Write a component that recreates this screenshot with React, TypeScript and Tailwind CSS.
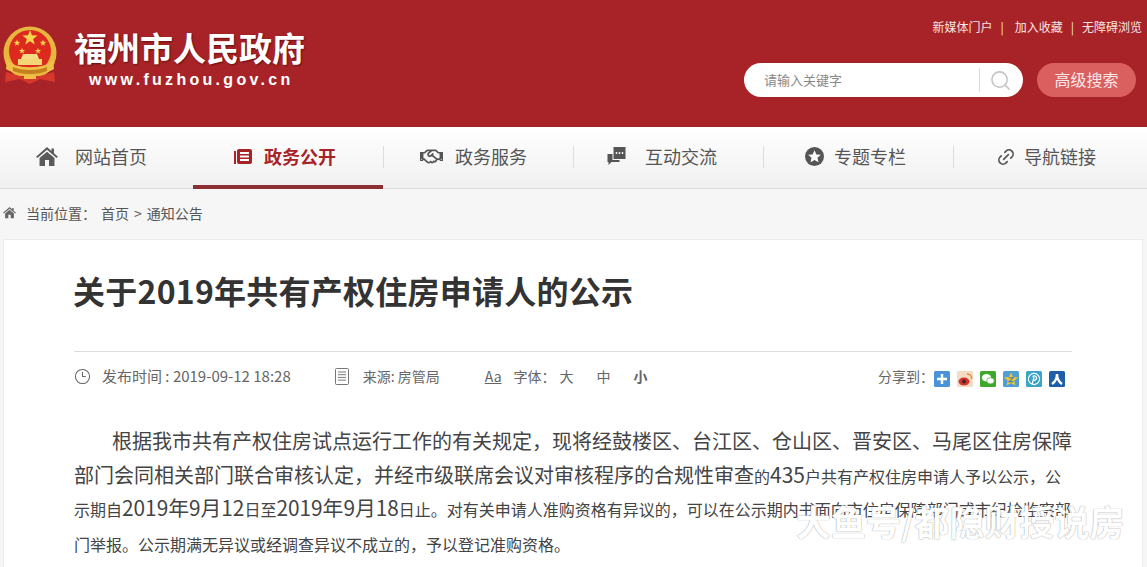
import React from "react";
import { Clock3, Search, Link2 } from "lucide-react";
import { FaRegHandshake } from "react-icons/fa";

const cjk = "font-['Noto_Sans_CJK_SC','Liberation_Sans',sans-serif]";

function Star({ x, y, r }: { x: number; y: number; r: number }) {
  const pts = Array.from({ length: 10 }, (_, i) => {
    const a = -Math.PI / 2 + (i * Math.PI) / 5;
    const d = i % 2 === 0 ? r : r * 0.42;
    return `${(x + d * Math.cos(a)).toFixed(2)},${(y + d * Math.sin(a)).toFixed(2)}`;
  }).join(" ");
  return <polygon points={pts} fill="#f6d24e" />;
}

function Emblem() {
  return (
    <svg width="56" height="60" viewBox="0 0 56 60">
      <circle cx="28" cy="27" r="26.5" fill="#e8b63e" />
      <circle cx="28" cy="25" r="21" fill="#dc2a1f" />
      <Star x={28} y={12} r={8} />
      <Star x={15} y={17} r={3.4} />
      <Star x={41} y={17} r={3.4} />
      <Star x={20} y={25} r={3.2} />
      <Star x={36} y={25} r={3.2} />
      <path d="M21 28 H35 L37 33 H19 Z" fill="#f6dd84" />
      <path d="M16 33 H40 V39 H16 Z" fill="#f3d576" />
      <path d="M5 33 C10 44 46 44 51 33 L52 43 C42 50 14 50 4 43 Z" fill="#f0bf48" />
      <path d="M11 41 C20 45 36 45 45 41 L45 45 C36 49 20 49 11 45 Z" fill="#c47f1f" />
      <path d="M4 46 L18 50 H38 L52 46 L53 56 L38 53 L28 58 L18 53 L3 56 Z" fill="#d6382b" />
      <rect x="22" y="49" width="12" height="4" fill="#f0bf48" />
    </svg>
  );
}

function NewsIcon() {
  return (
    <svg width="18" height="15" viewBox="0 0 18 15">
      <rect x="0" y="2" width="2" height="13" fill="#a82327" />
      <rect x="3" y="0" width="15" height="15" rx="2" fill="#a82327" />
      <rect x="6" y="3" width="9" height="2" fill="#fff" />
      <rect x="6" y="6.5" width="9" height="2" fill="#fff" />
      <rect x="6" y="10" width="9" height="2" fill="#fff" />
    </svg>
  );
}

function ChatIcon() {
  return (
    <svg width="19" height="19" viewBox="0 0 18 19">
      <path d="M0 7 H5 V13 H12 V15 H4 L1 18 V15 H0 Z" fill="#555" />
      <path d="M6 0 H18 V12 H6 Z" fill="#555" />
      <circle cx="9" cy="6" r="0.9" fill="#fff" />
      <circle cx="12" cy="6" r="0.9" fill="#fff" />
      <circle cx="15" cy="6" r="0.9" fill="#fff" />
    </svg>
  );
}

function StarIcon() {
  return (
    <svg width="19" height="19" viewBox="0 0 18 18">
      <circle cx="9" cy="9" r="9" fill="#555" />
      <polygon points="9,3 10.8,7 15,7.4 11.8,10.2 12.8,14.4 9,12.2 5.2,14.4 6.2,10.2 3,7.4 7.2,7" fill="#fff" />
    </svg>
  );
}

function HouseIcon({ size, color }: { size: number; color: string }) {
  return (
    <svg width={size} height={size * 0.86} viewBox="0 0 22 19">
      <path d="M11 0 L15.5 4 V1.5 H18 V6.2 L22 9.8 L20.6 11 L11 2.8 L1.4 11 L0 9.8 Z" fill={color} />
      <path d="M3.5 11 L11 4.8 L18.5 11 V19 H13 V13 H9 V19 H3.5 Z" fill={color} />
    </svg>
  );
}

function ListIcon() {
  return (
    <svg width="14" height="17" viewBox="0 0 14 17" fill="none" stroke="#777" strokeWidth="1">
      <rect x="0.5" y="0.5" width="13" height="16" rx="1" />
      <path d="M3 4 H11 M3 6.7 H11 M3 9.4 H11 M3 12.1 H11" />
    </svg>
  );
}

function ShareIcons() {
  return (
    <div className="mr-[7px] mt-[5px] flex items-center gap-[7px]">
      <svg width="16" height="16" viewBox="0 0 16 16">
        <rect width="16" height="16" rx="1.5" fill="#4b93d8" />
        <path d="M8 3 V13 M3 8 H13" stroke="#fff" strokeWidth="2.4" />
      </svg>
      <svg width="16" height="16" viewBox="0 0 16 16">
        <rect width="16" height="16" rx="1.5" fill="#f3dcc4" />
        <ellipse cx="7" cy="10.5" rx="5.5" ry="4" fill="#d6332c" />
        <circle cx="7" cy="10.5" r="2" fill="#3a2a2a" />
        <path d="M10 3 C13 3 15 5 14.5 8" stroke="#e58a2b" strokeWidth="1.4" fill="none" />
      </svg>
      <svg width="16" height="16" viewBox="0 0 16 16">
        <rect width="16" height="16" rx="1.5" fill="#3fa72a" />
        <ellipse cx="6.5" cy="6.8" rx="4.6" ry="3.8" fill="#fff" />
        <ellipse cx="10.5" cy="9.8" rx="3.8" ry="3.1" fill="#fff" stroke="#3fa72a" strokeWidth="0.7" />
      </svg>
      <svg width="16" height="16" viewBox="0 0 16 16">
        <rect width="16" height="16" rx="1.5" fill="#4f9fd6" />
        <polygon points="8,1.5 10,6 15,6.5 11.3,9.6 12.4,14.5 8,12 3.6,14.5 4.7,9.6 1,6.5 6,6" fill="#f2c633" />
        <path d="M5.8 6.8 H10.2 L6 10.6 H10.4" stroke="#3c7fb5" strokeWidth="1.1" fill="none" />
      </svg>
      <svg width="16" height="16" viewBox="0 0 16 16">
        <rect width="16" height="16" rx="1.5" fill="#3aa4c9" />
        <circle cx="8" cy="8" r="5.6" fill="none" stroke="#fff" strokeWidth="1.1" />
        <path d="M6.2 13 L8 6 M6.5 5.5 C9 4 11 5.5 10.5 7.5 C10 9.5 8 9.5 7.2 9" fill="none" stroke="#fff" strokeWidth="1.2" />
      </svg>
      <svg width="16" height="16" viewBox="0 0 16 16">
        <rect width="16" height="16" rx="1.5" fill="#1d5fa8" />
        <path d="M8 3 C8 8 6 11 3 13 M8 3 C8 8 10 11 13 13" fill="none" stroke="#fff" strokeWidth="2.4" />
      </svg>
    </div>
  );
}

const navItems = [
  { label: "网站首页", icon: <HouseIcon size={22} color="#5a5a5a" />, gap: "gap-[17px]", pad: "pl-[33px]" },
  { label: "政务公开", icon: <NewsIcon />, gap: "gap-[12px]", pad: "pl-[41px]", active: true },
  { label: "政务服务", icon: <FaRegHandshake size={23} color="#555" />, gap: "gap-[12px]", pad: "pl-[37px]" },
  { label: "互动交流", icon: <ChatIcon />, gap: "gap-[19px]", pad: "pl-[34px]" },
  { label: "专题专栏", icon: <StarIcon />, gap: "gap-[10px]", pad: "pl-[42px]" },
  { label: "导航链接", icon: <Link2 size={20} strokeWidth={2} color="#555" className="-rotate-45" />, gap: "gap-[8px]", pad: "pl-[43px]" },
];

export default function App() {
  return (
    <div className={`relative h-[567px] w-[1147px] overflow-hidden bg-[#f6f6f6] ${cjk}`}>
      <header className="flex h-[127px] justify-between bg-[#a82327] text-white">
        <div className="flex items-start pl-[2px] pt-[26px]">
          <Emblem />
          <div className="ml-[16px] flex flex-col">
            <div className="-mt-[1px] text-[33px] font-bold leading-[44px] whitespace-nowrap [text-shadow:1px_1px_2px_rgba(60,0,0,0.6)]">
              福州市人民政府
            </div>
            <div className="ml-[15px] mt-[1px] font-['Liberation_Sans',sans-serif] text-[16px] font-bold leading-[20px] tracking-[3.3px] whitespace-nowrap">
              www.fuzhou.gov.cn
            </div>
          </div>
        </div>
        <div className="flex flex-col items-end pr-[11px] pt-[18px]">
          <div className="flex items-center text-[12px] leading-[18px] text-[#f6e4e4] whitespace-nowrap">
            <span>新媒体门户</span>
            <span className="ml-[8px] mr-[7px]">|</span>
            <span className="ml-[4px]">加入收藏</span>
            <span className="ml-[8px] mr-[8px]">|</span>
            <span className="mr-[-6px]">无障碍浏览</span>
          </div>
          <div className="mt-[27px] flex items-center gap-[14px]">
            <div className="flex h-[34px] w-[279px] items-center rounded-full bg-white pl-[20px] pr-[11px]">
              <span className="flex-1 text-[13px] text-[#888]">请输入关键字</span>
              <div className="mr-[9px] h-[24px] w-px bg-[#ddd]" />
              <Search size={23} color="#c4c4c4" strokeWidth={1.6} />
            </div>
            <div className="flex h-[34px] w-[99px] items-center justify-center rounded-full bg-[#d9605f] pb-[2px] text-[16px] text-[#f9e6e6]">
              高级搜索
            </div>
          </div>
        </div>
      </header>

      <nav className="flex h-[62px] border-b border-[#ddd] bg-gradient-to-b from-white to-[#f0f0f0] pl-[3px]">
        {navItems.map((item, i) => (
          <div
            key={item.label}
            className={`relative flex h-[62px] w-[190px] items-center pb-[3px] ${item.gap} ${item.pad}`}
          >
            {item.icon}
            <span
              className={`text-[18px] whitespace-nowrap ${item.active ? "font-bold text-[#a82327]" : "text-[#555]"}`}
            >
              {item.label}
            </span>
            {item.active && <div className="absolute bottom-0 left-0 right-0 h-[4px] bg-[#8c2f33]" />}
            {i >= 1 && i <= 4 && <div className="absolute right-[-1px] top-[19px] h-[22px] w-px bg-[#ddd]" />}
          </div>
        ))}
      </nav>

      <div className="flex h-[50px] items-center pb-[2px] pl-[3px] text-[14px] text-[#555]">
        <HouseIcon size={13} color="#666" />
        <span className="ml-[10px]">当前位置：</span>
        <span className="ml-[5px]">首页</span>
        <span className="mx-[5px]">&gt;</span>
        <span>通知公告</span>
      </div>

      <main className="ml-[3px] min-h-[340px] w-[1140px] border border-[#ececec] bg-white pl-[70px] pr-[70px]">
        <h1 className="-ml-[1px] pt-[27px] text-[32px] font-bold leading-[46px] tracking-[0.25px] text-[#333] whitespace-nowrap">
          关于2019年共有产权住房申请人的公示
        </h1>
        <div className="mt-[38px] flex h-[52px] items-center border-t border-[#ddd] pb-[2px] text-[14px] text-[#666]">
          <Clock3 size={17} strokeWidth={1.5} color="#666" />
          <span className="ml-[11px] whitespace-nowrap text-[15px]">
            发布时间 : 2019-09-12 18:28
          </span>
          <span className="ml-[44px] flex"><ListIcon /></span>
          <span className="ml-[14px] whitespace-nowrap">来源: 房管局</span>
          <span className="ml-[45px] underline">Aa</span>
          <span className="ml-[12px] whitespace-nowrap">字体：</span>
          <span className="ml-[4px]">大</span>
          <span className="ml-[23px]">中</span>
          <span className="ml-[23px] font-bold">小</span>
          <span className="ml-auto whitespace-nowrap">分享到：</span>
          <ShareIcons />
        </div>
        <div className="mt-[21px] text-[#444] whitespace-nowrap">
          <p className="pl-[38px] text-[20px] leading-[34px]">
            根据我市共有产权住房试点运行工作的有关规定，现将经鼓楼区、台江区、仓山区、晋安区、马尾区住房保障
          </p>
          <p className="text-[20px] leading-[33px]">
            部门会同相关部门联合审核认定，并经市级联席会议对审核程序的合规性审查
            <span className="text-[16px] leading-none">的</span>
            <span className="text-[21px] leading-none">435</span>
            <span className="text-[16px] leading-none">户共有产权住房申请人予以公示，公</span>
          </p>
          <p className="text-[16px] leading-[36px]">
            示期自<span className="text-[20.8px] leading-none">2019年9月12</span>日至
            <span className="text-[20.8px] leading-none">2019年9月18</span>日止。对有关申请人准购资格有异议的，可以在公示期内书面向市住房保障部门或市纪检监察部
          </p>
          <p className="text-[16px] leading-[34px]">门举报。公示期满无异议或经调查异议不成立的，予以登记准购资格。</p>
        </div>
      </main>

      <div className="absolute left-[796px] top-[499px] text-[35px] font-bold leading-[44px] text-white whitespace-nowrap [text-shadow:0_0_1px_#777]">
        大鱼号/都隐财授说房
      </div>
    </div>
  );
}
